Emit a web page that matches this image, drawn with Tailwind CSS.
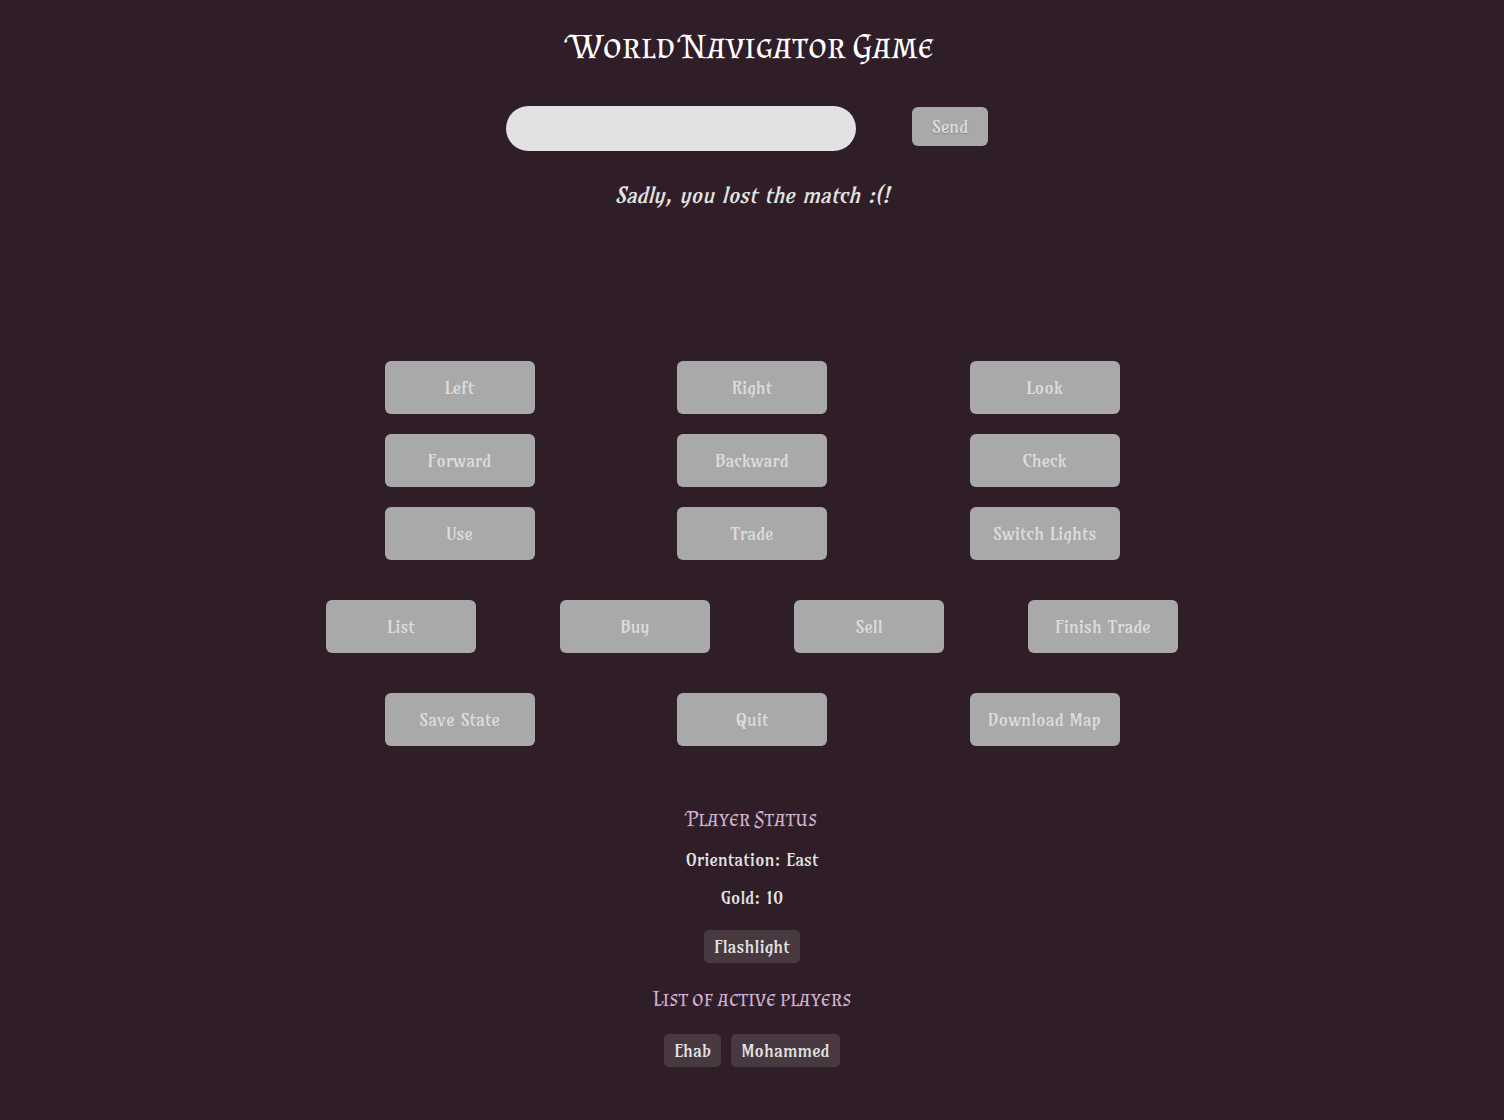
<!DOCTYPE html>
<html lang="en">
<head>
<meta charset="utf-8">
<meta name="viewport" content="width=device-width, initial-scale=1">
<title>World Navigator Game</title>
<script src="https://cdn.jsdelivr.net/npm/@tailwindcss/browser@4"></script>
</head>
<body class="min-h-screen bg-[#2f1e28] pt-6 pb-12 text-center font-['Amarante','Liberation_Serif',serif] text-[18px] leading-6 text-[#e2e2e2]">
  <header>
    <h1 class="font-['Almendra_SC','Liberation_Serif',serif] text-[36px] leading-[44px] text-white">World Navigator Game</h1>
  </header>
  <main>
    <form class="mt-[38px] flex items-start justify-center gap-14 pr-[10px]">
      <input type="text" aria-label="Command" class="h-[45px] w-[350px] rounded-full bg-[#e2e2e2] px-5 text-black outline-none">
      <button type="button" class="mt-px h-[39px] w-[76px] rounded-md bg-[#a9a9a9] text-[#dcdcdc] [text-shadow:0_1px_1px_#888]">Send</button>
    </form>
    <p class="mt-7 text-[22px] leading-8 italic">Sadly, you lost the match :(!</p>

    <div class="mx-auto mt-[150px] flex max-w-[1020px] flex-col gap-10 text-[#dcdcdc] [text-shadow:0_1px_1px_#888]">
      <div class="flex flex-col gap-5">
        <div class="flex justify-evenly">
          <button type="button" class="h-[53px] w-[150px] rounded-md bg-[#a9a9a9]">Left</button>
          <button type="button" class="h-[53px] w-[150px] rounded-md bg-[#a9a9a9]">Right</button>
          <button type="button" class="h-[53px] w-[150px] rounded-md bg-[#a9a9a9]">Look</button>
        </div>
        <div class="flex justify-evenly">
          <button type="button" class="h-[53px] w-[150px] rounded-md bg-[#a9a9a9]">Forward</button>
          <button type="button" class="h-[53px] w-[150px] rounded-md bg-[#a9a9a9]">Backward</button>
          <button type="button" class="h-[53px] w-[150px] rounded-md bg-[#a9a9a9]">Check</button>
        </div>
        <div class="flex justify-evenly">
          <button type="button" class="h-[53px] w-[150px] rounded-md bg-[#a9a9a9]">Use</button>
          <button type="button" class="h-[53px] w-[150px] rounded-md bg-[#a9a9a9]">Trade</button>
          <button type="button" class="h-[53px] w-[150px] rounded-md bg-[#a9a9a9]">Switch Lights</button>
        </div>
      </div>
      <div class="flex justify-evenly">
        <button type="button" class="h-[53px] w-[150px] rounded-md bg-[#a9a9a9]">List</button>
        <button type="button" class="h-[53px] w-[150px] rounded-md bg-[#a9a9a9]">Buy</button>
        <button type="button" class="h-[53px] w-[150px] rounded-md bg-[#a9a9a9]">Sell</button>
        <button type="button" class="h-[53px] w-[150px] rounded-md bg-[#a9a9a9]">Finish Trade</button>
      </div>
      <div class="flex justify-evenly">
        <button type="button" class="h-[53px] w-[150px] rounded-md bg-[#a9a9a9]">Save State</button>
        <button type="button" class="h-[53px] w-[150px] rounded-md bg-[#a9a9a9]">Quit</button>
        <button type="button" class="h-[53px] w-[150px] rounded-md bg-[#a9a9a9]">Download Map</button>
      </div>
    </div>

    <section class="mt-[60px]">
      <h2 class="font-['Almendra_SC','Liberation_Serif',serif] text-[22px] leading-[26px] text-[#d3b1d3]">Player Status</h2>
      <p class="mt-4">Orientation: East</p>
      <p class="mt-[14px]">Gold: 10</p>
      <ul class="mt-5 flex justify-center gap-[10px]">
        <li class="flex h-[33px] items-center rounded-[5px] bg-[#48383f] px-[10px]">Flashlight</li>
      </ul>
    </section>
    <section class="mt-[23px]">
      <h2 class="font-['Almendra_SC','Liberation_Serif',serif] text-[22px] leading-[26px] text-[#d3b1d3]">List of active players</h2>
      <ul class="mt-[22px] flex justify-center gap-[10px]">
        <li class="flex h-[33px] items-center rounded-[5px] bg-[#48383f] px-[10px]">Ehab</li>
        <li class="flex h-[33px] items-center rounded-[5px] bg-[#48383f] px-[10px]">Mohammed</li>
      </ul>
    </section>
  </main>
</body>
</html>
